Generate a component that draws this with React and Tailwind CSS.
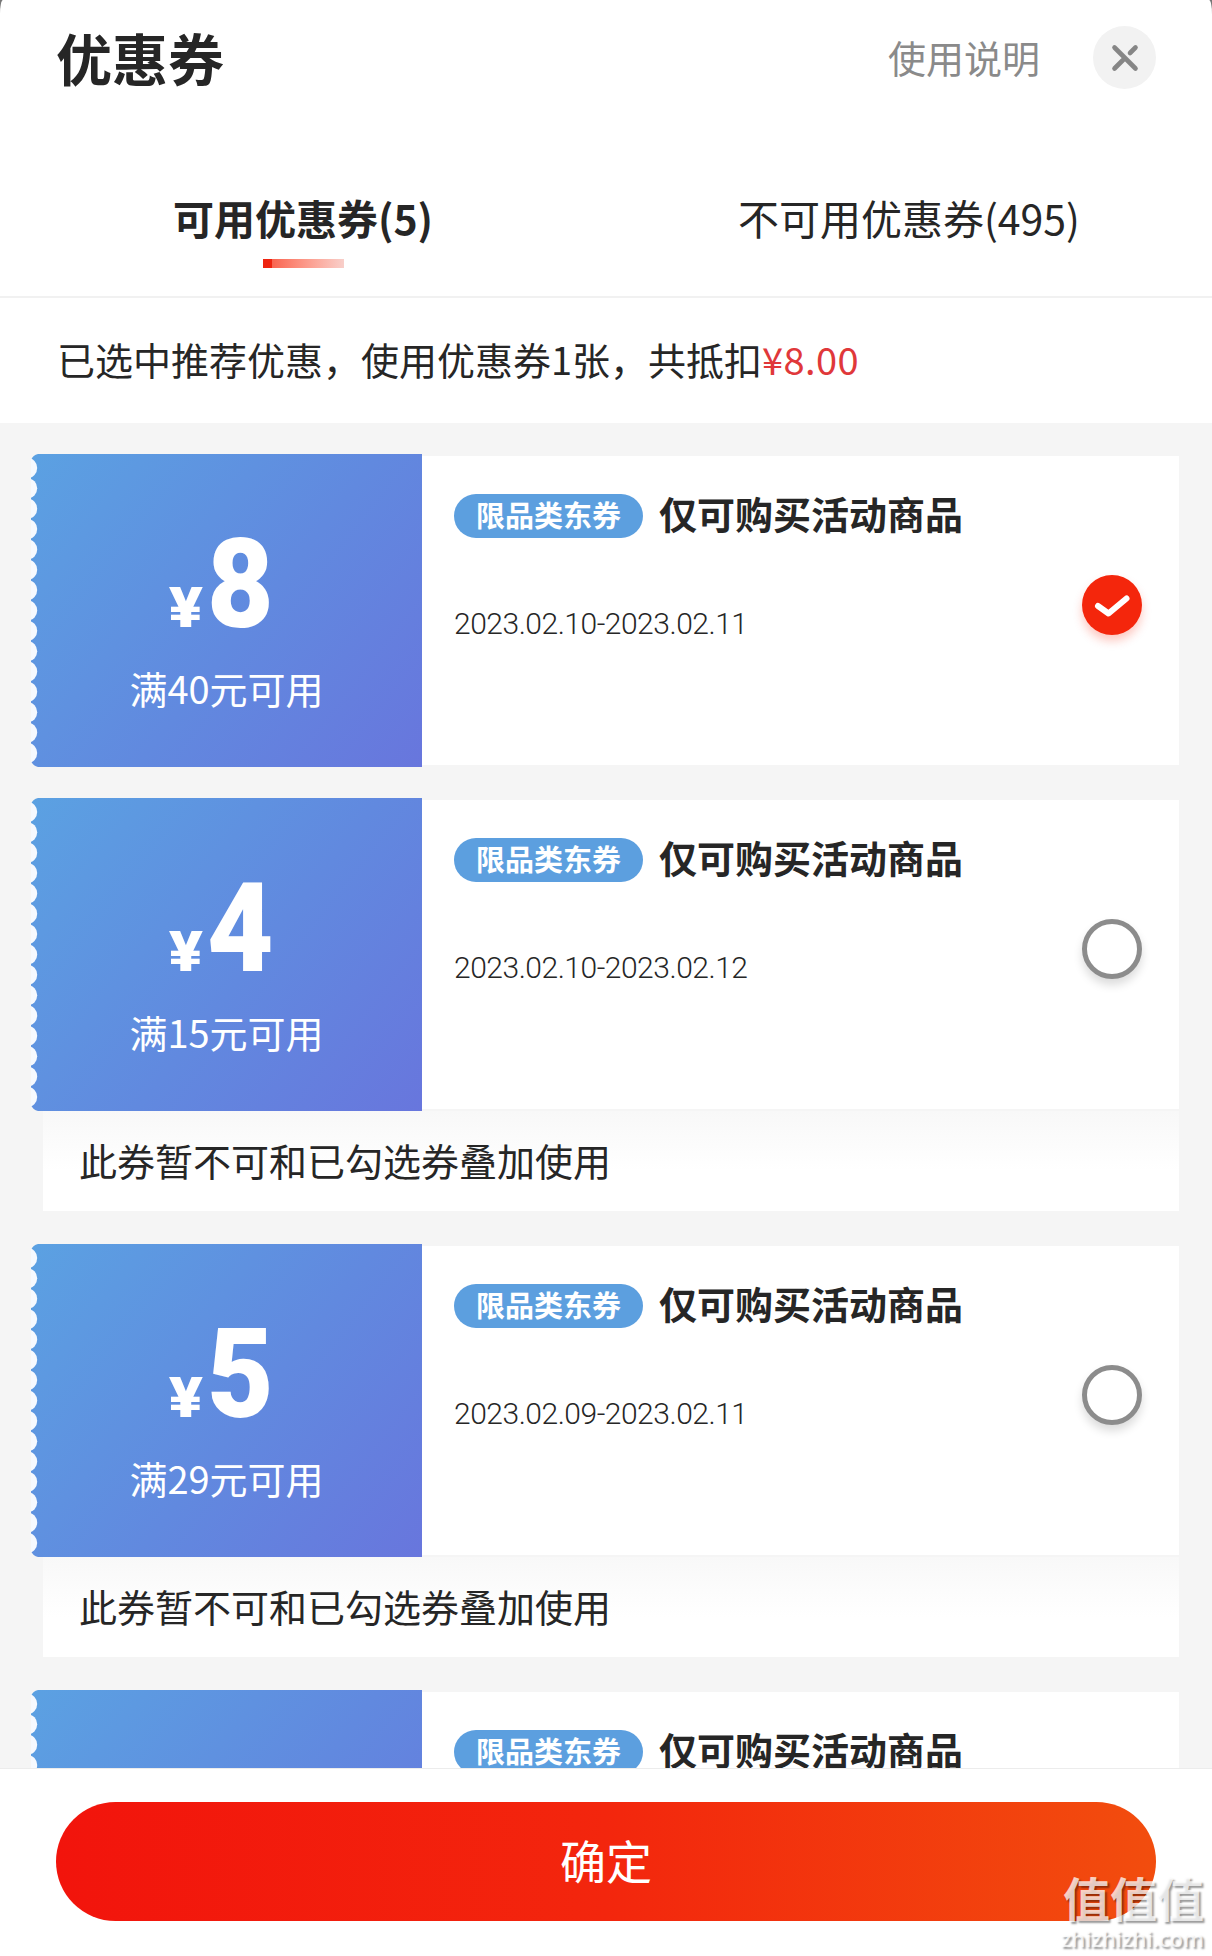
import React from "react";

const coupons = [
  { id: 1, amount: "8", limit: "满40元可用", date: "2023.02.10-2023.02.11", checked: true },
  { id: 2, amount: "4", limit: "满15元可用", date: "2023.02.10-2023.02.12", note: true },
  { id: 3, amount: "5", limit: "满29元可用", date: "2023.02.09-2023.02.11", note: true },
  { id: 4 },
];

const teeth = Array.from({ length: 15 }, (_, i) => i);

function Scallops() {
  return (
    <svg className="absolute left-0 top-0" width="8" height="313" viewBox="0 0 8 313">
      <path d="M0 0H7Q2 1 0 6Z M0 313H7Q2 312 0 307Z" fill="#f5f5f5" />
      {teeth.map((i) => (
        <ellipse key={i} cx="-3" cy={14 + i * 20.35} rx="9.2" ry="9.9" fill="#f6f9fe" />
      ))}
    </svg>
  );
}

function Selector({ checked }) {
  if (!checked) {
    return <div className="size-[60px] rounded-full border-[5px] border-[#8c8c8c] bg-white shadow-[0_6px_10px_rgba(0,0,0,0.14)]" />;
  }
  return (
    <div className="flex size-[60px] items-center justify-center rounded-full bg-[#f4260c] shadow-[0_6px_10px_rgba(247,38,12,0.25)]">
      <svg width="40" height="28" viewBox="0 0 40 28" fill="none" stroke="#fff" strokeWidth="6" strokeLinecap="round" strokeLinejoin="round">
        <path d="M6 15L16.500 22.500L34.500 7.500" />
      </svg>
    </div>
  );
}

function Coupon({ amount, limit, date, checked, note }) {
  return (
    <div className="shrink-0">
      <div className="flex h-[313px] items-center">
        <div className="relative flex h-[313px] w-[391px] flex-col bg-[linear-gradient(128deg,#5ba1e2_0%,#6189df_55%,#6876dd_100%)] pt-[66px] text-white">
          <Scallops />
          {amount && (
            <>
              <div className="flex h-[130px] items-baseline pl-[137px] font-[Roboto] font-black leading-[130px]">
                <span className="w-[36px] scale-x-[1.13] text-center text-[56px]">¥</span>
                <span className="w-[72px] scale-x-[0.92] text-center text-[125px]">{amount}</span>
              </div>
              <div className="mt-[10px] text-center text-[38px] leading-[56px]">{limit}</div>
            </>
          )}
        </div>
        <div className="flex h-[309px] w-[757px] items-start justify-between bg-white pl-8 pr-[37px]">
          <div>
            <div className="mt-[32px] flex h-[56px] items-center gap-4">
              <span className="flex h-[44px] w-[189px] items-center justify-center rounded-full bg-[#5c9fdf] pb-[3px] text-[29px] font-bold leading-none text-white">限品类东券</span>
              <span className="pb-[8px] text-[38px] font-bold">仅可购买活动商品</span>
            </div>
            {date && <div className="mt-[58px] font-[Roboto] text-[30px] font-light leading-[44px] tracking-[-0.48px]">{date}</div>}
          </div>
          {date && <div className="mt-[119px]"><Selector checked={checked} /></div>}
        </div>
      </div>
      {note && (
        <div className="mb-[2px] ml-[12px] flex h-[100px] w-[1136px] items-center bg-linear-to-b from-[#f8f8f8] to-white to-60% pb-[3px] pl-9 text-[38px]">
          此券暂不可和已勾选券叠加使用
        </div>
      )}
    </div>
  );
}

export default function App() {
  return (
    <div className="relative h-[1956px] w-[1212px] overflow-hidden bg-[#777] font-['Noto_Sans_CJK_SC',sans-serif] text-[#262626]">
      <div className="flex h-full flex-col overflow-hidden rounded-t-[3px_14px] bg-white">
        <header className="flex h-[160px] shrink-0 items-start justify-between pl-[56px] pr-14">
          <h1 className="mt-[15px] text-[56px] font-bold leading-[84px]">优惠券</h1>
          <div className="mt-[26px] flex items-center gap-[53px]">
            <span className="pb-[1px] text-[38px] leading-[62px] text-[#8a8a8a]">使用说明</span>
            <span className="flex size-[63px] items-center justify-center rounded-full bg-[#f2f2f2]">
              <svg width="28" height="28" viewBox="0 0 28 28" fill="none" stroke="#868686" strokeWidth="4.6" strokeLinecap="round">
                <path d="M3.500 3.500L24.500 24.500M3.500 24.500L13 15M19 9L24.500 3.500" />
              </svg>
            </span>
          </div>
        </header>
        <nav className="flex h-[138px] shrink-0 border-b-2 border-[#f1f1f1] text-[41px] leading-[60px]">
          <div className="flex flex-1 flex-col items-center pt-[27px] font-bold">
            可用优惠券(5)
            <span className="mt-[12px] flex h-[9px] w-[81px] shrink-0 bg-linear-to-r from-[#f7523e] to-[#f8cfca]"><i className="w-[9px] bg-[#ee2410]" /></span>
          </div>
          <div className="flex flex-1 justify-center pt-[27px]">不可用优惠券(495)</div>
        </nav>
        <div className="flex h-[125px] shrink-0 items-center pb-[5px] pl-[57px] text-[38px]">
          <span>已选中推荐优惠，使用优惠券1张，共抵扣</span><span className="text-[#e0383a] tracking-[0.4px]">¥8.00</span>
        </div>
        <main className="flex h-[1345px] shrink-0 flex-col gap-[31px] overflow-hidden bg-[#f5f5f5] pl-[31px] pt-[31px]">
          {coupons.map((c) => <Coupon key={c.id} {...c} />)}
        </main>
        <footer className="flex flex-1 items-start justify-center border-t border-[#ececec] pt-[33px]">
          <button className="h-[119px] w-[1100px] rounded-full bg-[linear-gradient(90deg,#f2140c_0%,#f3260d_50%,#f24d0e_100%)] pb-[4px] text-[46px] text-white">确定</button>
        </footer>
      </div>
      <div className="absolute bottom-[2px] right-2 flex flex-col items-end text-white/75 [text-shadow:2px_2px_2px_rgba(0,0,0,0.4)]">
        <span className="text-[47px] font-bold leading-[50px]">值值值</span>
        <span className="font-['Open_Sans'] text-[22px] font-semibold leading-[32px]">zhizhizhi.com</span>
      </div>
    </div>
  );
}
